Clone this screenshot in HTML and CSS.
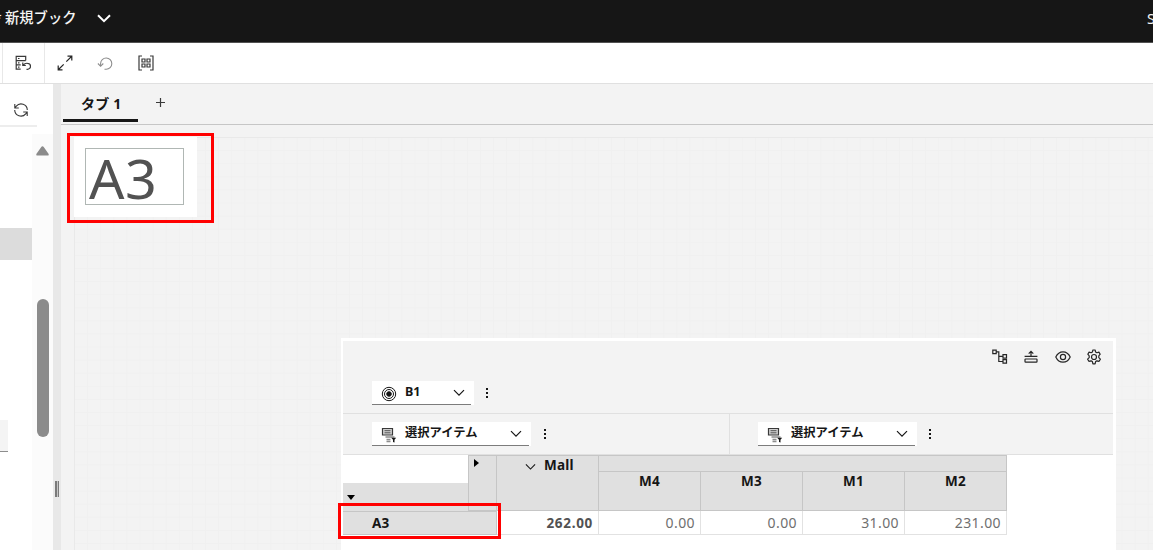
FILE: index.html
```html
<!DOCTYPE html>
<html lang="ja">
<head>
<meta charset="utf-8">
<title>新規ブック</title>
<link rel="stylesheet" href="styles.css">
</head>
<body>
<svg class="symbols" width="0" height="0">
  <symbol id="chevron" viewBox="0 0 12 8"><path d="M1 1.2 6 6.2 11 1.2" fill="none" stroke="currentColor" stroke-width="1.2"/></symbol>
  <symbol id="members" viewBox="0 0 16 16"><path d="M1.500 1.500h10v6.500h-10z" fill="#d0d0d0" stroke="#393939" stroke-width="1.200"/><path d="M3.500 3.700h6M3.500 5.800h6M4.500 10h9" fill="none" stroke="#525252"/><path d="M5.500 12.500h4M5.500 14.500h4" stroke="#8d8d8d" stroke-width="1.300"/><path d="M10.200 10.800h5l-1.700 2v2.700l-1.500-.5v-2.200z" fill="#161616"/></symbol>
</svg>
<div class="app">
  <header class="header">
    <span class="mark">*</span><span class="title">新規ブック</span>
    <svg class="title-chevron" width="14" height="9" viewBox="0 0 14 9"><path d="M1 1.2 7 7.2 13 1.2" fill="none" stroke="#fff" stroke-width="2"/></svg>
    <span class="user">S</span>
  </header>
  <div class="toolbar">
    <div class="tool-first">
      <svg width="16" height="16" viewBox="0 0 16 16" fill="none" stroke="#393939" stroke-width="1.200"><path d="M10.700 5.500V1.300H1.200v12.900h4.500M1.200 5.600h9.500M1.200 9.900h4.500M3 3.500h1.500M3 7.800h1.500M3 12.100h1.500M8 10.300Q10 8 12.500 8.300A3 3 0 0 1 12.500 14.300H11.500M7.800 7.500v3h3"/></svg>
    </div>
    <div class="tools">
      <svg width="16" height="16" viewBox="0 0 16 16" fill="none" stroke="#262626" stroke-width="1.2"><path d="M10.500 1.200h4.300v4.300M14.500 1.500 9.300 6.700M1.200 10.500v4.300h4.300M1.500 14.500l5.200-5.200"/></svg>
      <svg width="16" height="16" viewBox="0 0 16 16" fill="none" stroke="#8d8d8d" stroke-width="1.1"><path d="M7.500 14.200h1.700A5.600 5.600 0 1 0 3.600 8.500v2.700M.9 8.500l2.700 2.800 2.700-2.800"/></svg>
      <svg width="16" height="16" viewBox="0 0 16 16" fill="none" stroke="#393939" stroke-width="1.200"><path d="M4 1H1v14h3M12 1h3v14h-3M4 4h3v3H4zM9 4h3v3H9zM4 9h3v3H4zM9 9h3v3H9z"/></svg>
    </div>
  </div>
  <div class="body">
    <aside class="side">
      <div class="side-head">
        <svg width="16" height="16" viewBox="0 0 16 16" fill="none" stroke="#393939" stroke-width="1.1"><path d="M14.300 8A6.200 6.200 0 0 0 3.300 4.200L2 5.700M1.800 2v4h4M1.700 8a6.200 6.200 0 0 0 11 3.800l1.300-1.500M14.200 14v-4h-4"/></svg>
      </div>
      <div class="side-body">
        <div class="tree">
          <div class="tree-selected"></div>
          <div class="tree-input"></div>
        </div>
        <div class="track">
          <svg width="13" height="10" viewBox="0 0 13 10"><path d="M6.5.3q.8 0 1.4.9l4.600 6.500q.8 1.800-1 1.800H1.500Q-.3 9.500.5 7.700L5.100 1.200Q5.700.3 6.500.3z" fill="#8b8b8b"/></svg>
          <div class="thumb"></div>
        </div>
      </div>
    </aside>
    <div class="splitter"><div class="grip"></div></div>
    <main class="main">
      <nav class="tabs"><div class="tab">タブ 1</div>
        <svg class="add" width="9" height="9" viewBox="0 0 9 9"><path d="M4.500 0v9M0 4.500h9" stroke="#393939" stroke-width="1.200"/></svg>
      </nav>
      <div class="canvas">
        <div class="grid"></div>
        <div class="text-widget"><div class="text-box">A3</div></div>
        <section class="explorer">
          <div class="actions">
            <svg width="16" height="16" viewBox="0 0 16 16" fill="none" stroke="#262626" stroke-width="1.200"><path d="M.8 1.200h3.400v3.400H.8zM4.200 2.900h2.600v9.600h4.200M6.800 7.400h4.200M11 5.700h3.500v3.500H11zM11 10.700h3.500v3.500H11z"/></svg>
            <svg width="16" height="16" viewBox="0 0 16 16" fill="none" stroke="#262626" stroke-width="1.200"><path d="M1.600 7.300h12.800M8 7V2.400M5.700 4.600 8 2.300l2.300 2.300M2.600 10h10.800q.6 0 .6.600v2q0 .6-.6.600H2.600q-.6 0-.6-.6v-2q0-.6.600-.6z"/></svg>
            <svg width="16" height="16" viewBox="0 0 16 16" fill="none" stroke="#262626" stroke-width="1.200"><path d="M.8 8Q3.200 2.800 8 2.800T15.200 8Q12.800 13.200 8 13.200T.8 8z"/><circle cx="8" cy="8" r="2.600"/></svg>
            <svg width="16" height="16" viewBox="0 0 16 16" fill="none" stroke="#262626" stroke-width="1.200" stroke-linejoin="round"><path d="m6.900 1h2.200l.5 2 1.300.7 2-.6 1.300 2.100-1.400 1.600v1.800l1.600 1.500-1.300 2.200-2.200-.5-1.300.8-.5 2.200H6.900l-.5-2.200-1.300-.8-2.200.5-1.300-2.200 1.600-1.500V6.800L1.800 5.200 3.100 3.100l2 .6L6.400 3z"/><circle cx="8" cy="8" r="2.500"/></svg>
          </div>
          <div class="context">
            <div class="select short">
              <svg width="16" height="16" viewBox="0 0 16 16" fill="none" stroke="#161616"><circle cx="8" cy="8" r="6.700"/><circle cx="8" cy="8" r="4.500"/><circle cx="8" cy="8" r="2.300" fill="#161616"/></svg>
              <span class="name">B1</span><svg class="chev" width="12" height="8"><use href="#chevron"/></svg>
            </div><div class="dots"><i></i><i></i><i></i></div>
          </div>
          <div class="dims">
            <div class="dim"><div class="select"><svg width="16" height="16"><use href="#members"/></svg><span class="name jp">選択アイテム</span><svg class="chev" width="12" height="8"><use href="#chevron"/></svg></div><div class="dots far"><i></i><i></i><i></i></div></div>
            <div class="dim"><div class="select"><svg width="16" height="16"><use href="#members"/></svg><span class="name jp">選択アイテム</span><svg class="chev" width="12" height="8"><use href="#chevron"/></svg></div><div class="dots"><i></i><i></i><i></i></div></div>
          </div>
          <div class="table">
            <div class="corner"></div>
            <div class="row-toggle"><svg width="8" height="5" viewBox="0 0 8 5"><path d="M0 0h8L4 5z"/></svg></div>
            <div class="col-toggle"><svg width="5" height="8" viewBox="0 0 5 8"><path d="M0 0v8l5-4z"/></svg></div>
            <div class="th mall"><svg width="11" height="8"><use href="#chevron"/></svg><span>Mall</span></div>
            <div class="strip"></div>
            <div class="th">M4</div><div class="th">M3</div><div class="th">M1</div><div class="th">M2</div>
            <div class="row-name">A3</div>
            <div class="td total">262.00</div><div class="td">0.00</div><div class="td">0.00</div><div class="td">31.00</div><div class="td">231.00</div>
          </div>
        </section>
        <div class="callout callout-text"></div>
        <div class="callout callout-row"></div>
      </div>
    </main>
  </div>
</div>
</body>
</html>
```

FILE: styles.css
```css
* { box-sizing: border-box; }
body { margin: 0; font-family: "Noto Sans", "Noto Sans CJK JP", sans-serif; color: #161616; overflow: hidden; }
svg { display: block; flex: none; }
.symbols { position: absolute; }
.app { width: 1153px; height: 550px; display: flex; flex-direction: column; background: #fff; overflow: hidden; }
.header { height: 43px; flex: none; display: flex; align-items: center; background: #161616; border-bottom: 1px solid #525252; color: #f4f4f4; padding-bottom: 6px; overflow: hidden; }
.mark { width: 5px; margin-left: -5px; margin-right: 5px; font-size: 12px; }
.title { width: 72px; font: 500 14.3px/20px "Noto Sans CJK JP", sans-serif; white-space: nowrap; margin-top: -2px; }
.title-chevron { margin-left: 20px; }
.user { margin-left: auto; width: 6px; font-size: 14.500px; margin-top: -1px; }
.toolbar { height: 41px; flex: none; display: flex; border-bottom: 1px solid #e0e0e0; padding-left: 2px; }
.tool-first { width: 43px; border: solid #e8e8e8; border-width: 0 1px; display: flex; align-items: center; padding-left: 12px; }
.tools { display: flex; align-items: center; gap: 24.300px; padding-left: 12px; }
.body { flex: 1; display: flex; min-height: 0; }
.side { width: 53px; display: flex; flex-direction: column; }
.side-head { width: 37px; height: 43px; border-bottom: 2px solid #ededed; padding: 18px 0 0 13px; }
.side-body { flex: 1; display: flex; margin-top: 7px; }
.tree { width: 32px; padding-top: 94px; }
.tree-selected { height: 32px; background: #dcdcdc; }
.tree-input { width: 8px; height: 32px; margin-top: 160px; background: #f4f4f4; border-bottom: 1px solid #8d8d8d; }
.track { width: 21px; background: #fbfbfb; padding: 12px 0 0 4px; }
.thumb { width: 12px; height: 138px; margin: 143px 0 0 1px; border-radius: 6px; background: #8b8b8b; }
.splitter { width: 8px; background: #e8e8e8; padding: 397px 0 0 2px; }
.grip { width: 4px; height: 16px; border: solid #7a7a7a; border-width: 0 1px 0 2px; background: #c6c6c6; }
.main { flex: 1; min-width: 0; display: flex; flex-direction: column; background: #f3f3f3; }
.tabs { height: 41px; flex: none; display: flex; border-bottom: 1px solid #c6c6c6; padding-left: 2px; }
.tab { width: 75px; height: 38px; border-bottom: 3px solid #161616; padding-left: 18px; font: 700 14px/40px "Noto Sans", "Noto Sans CJK JP", sans-serif; letter-spacing: .2px; white-space: nowrap; }
.add { margin: 14px 0 0 18px; }
.canvas { position: relative; flex: 1; overflow: hidden; padding: 12px 0 0 13px; }
.grid { height: 100%; border: solid #e9e9e9; border-width: 1px 0 0 1px; background-image: linear-gradient(90deg, transparent 12.100px, #f0f0f0 12.100px), linear-gradient(transparent 12.100px, #f0f0f0 12.100px); background-size: 13.100px 13.100px; }
.text-widget { position: absolute; left: 13px; top: 12px; width: 123px; height: 80px; background: #fff; padding: 11px; }
.text-box { width: 99px; height: 57px; border: 1px solid #b0b7b4; padding-left: 3px; font-size: 55.500px; line-height: 58px; letter-spacing: .5px; color: #525252; }
.explorer { position: absolute; left: 280px; top: 213px; width: 775px; height: 240px; background: #fff; border: solid #fff; border-width: 3px 3px 0 2px; }
.actions { height: 31px; display: flex; justify-content: flex-end; gap: 15.500px; padding: 8px 11px 0 0; background: #f3f3f3; }
.context { height: 42px; display: flex; padding: 9px 0 0 29px; background: #f3f3f3; border-bottom: 1px solid #e0e0e0; }
.select { position: relative; width: 159px; height: 24px; background: #fff; display: flex; align-items: center; padding: 0 9px 0 8.500px; }
.select::after { content: ""; position: absolute; left: 0; right: 2px; bottom: 0; height: 1px; background: #7c7c7c; }
.select.short { width: 102px; }
.select.short::after { right: 3px; }
.select > svg:first-child { margin-top: 2px; }
.name { margin-left: 8.500px; font-size: 12.500px; font-weight: 700; line-height: 20px; margin-top: -2px; white-space: nowrap; }
.name.jp { font: 700 12.300px/20px "Noto Sans CJK JP", sans-serif; margin-top: -4px; }
.chev { margin-left: auto; }
.dots { display: flex; flex-direction: column; gap: 2px; margin: 7px 0 0 12px; }
.dots.far { margin-left: 13px; }
.dots i { width: 2px; height: 2px; background: #161616; }
.dims { display: flex; height: 41px; background: #f3f3f3; border-bottom: 1px solid #e0e0e0; }
.dim { width: 386px; display: flex; padding: 8px 0 0 29px; }
.dim:last-child { width: 384px; border-left: 1px solid #e0e0e0; padding-left: 28px; }
.table { width: 664px; display: grid; grid-template-columns: 125px 29px 102px 102px 102px 102px 102px; grid-template-rows: 16px 12px 28px 24px; font-size: 13.500px; }
.corner { grid-row: 1 / 3; background: #fff; }
.row-toggle { grid-area: 3 / 1; background: #e0e0e0; padding: 12px 0 0 4px; }
.col-toggle { grid-area: 1 / 2 / 4 / 3; background: #e0e0e0; border: 1px solid #c6c6c6; border-right: 0; padding: 3px 0 0 5px; }
.th { grid-row: 2 / 4; background: #e0e0e0; border: solid #c6c6c6; border-width: 1px 1px 1px 0; box-shadow: -1px 0 #c6c6c6; font-weight: 700; line-height: 18px; text-align: center; letter-spacing: .2px; }
.mall { grid-area: 1 / 3 / 4 / 4; display: flex; gap: 8.500px; padding-left: 27.500px; }
.mall svg { margin-top: 7px; }
.strip { grid-area: 1 / 4 / 2 / 8; background: #e0e0e0; border: solid #c6c6c6; border-width: 1px 1px 0 0; }
.row-name { grid-area: 4 / 1 / 5 / 3; background: #e0e0e0; border: solid #c6c6c6; border-width: 1px 1px 1px 0; padding-left: 29px; font-weight: 700; line-height: 22px; letter-spacing: .2px; }
.td { grid-row: 4; border: solid #e2e2e2; border-width: 0 1px 1px 0; padding-right: 5px; text-align: right; color: #6f6f6f; line-height: 24px; font-size: 14px; letter-spacing: .4px; }
.total { font-weight: 700; color: #525252; font-size: 13.500px; letter-spacing: .7px; }
.callout { position: absolute; border: 3px solid #f00; }
.callout-text { left: 6px; top: 8px; width: 147px; height: 90px; }
.callout-row { left: 277px; top: 378px; width: 163px; height: 36px; }
```
